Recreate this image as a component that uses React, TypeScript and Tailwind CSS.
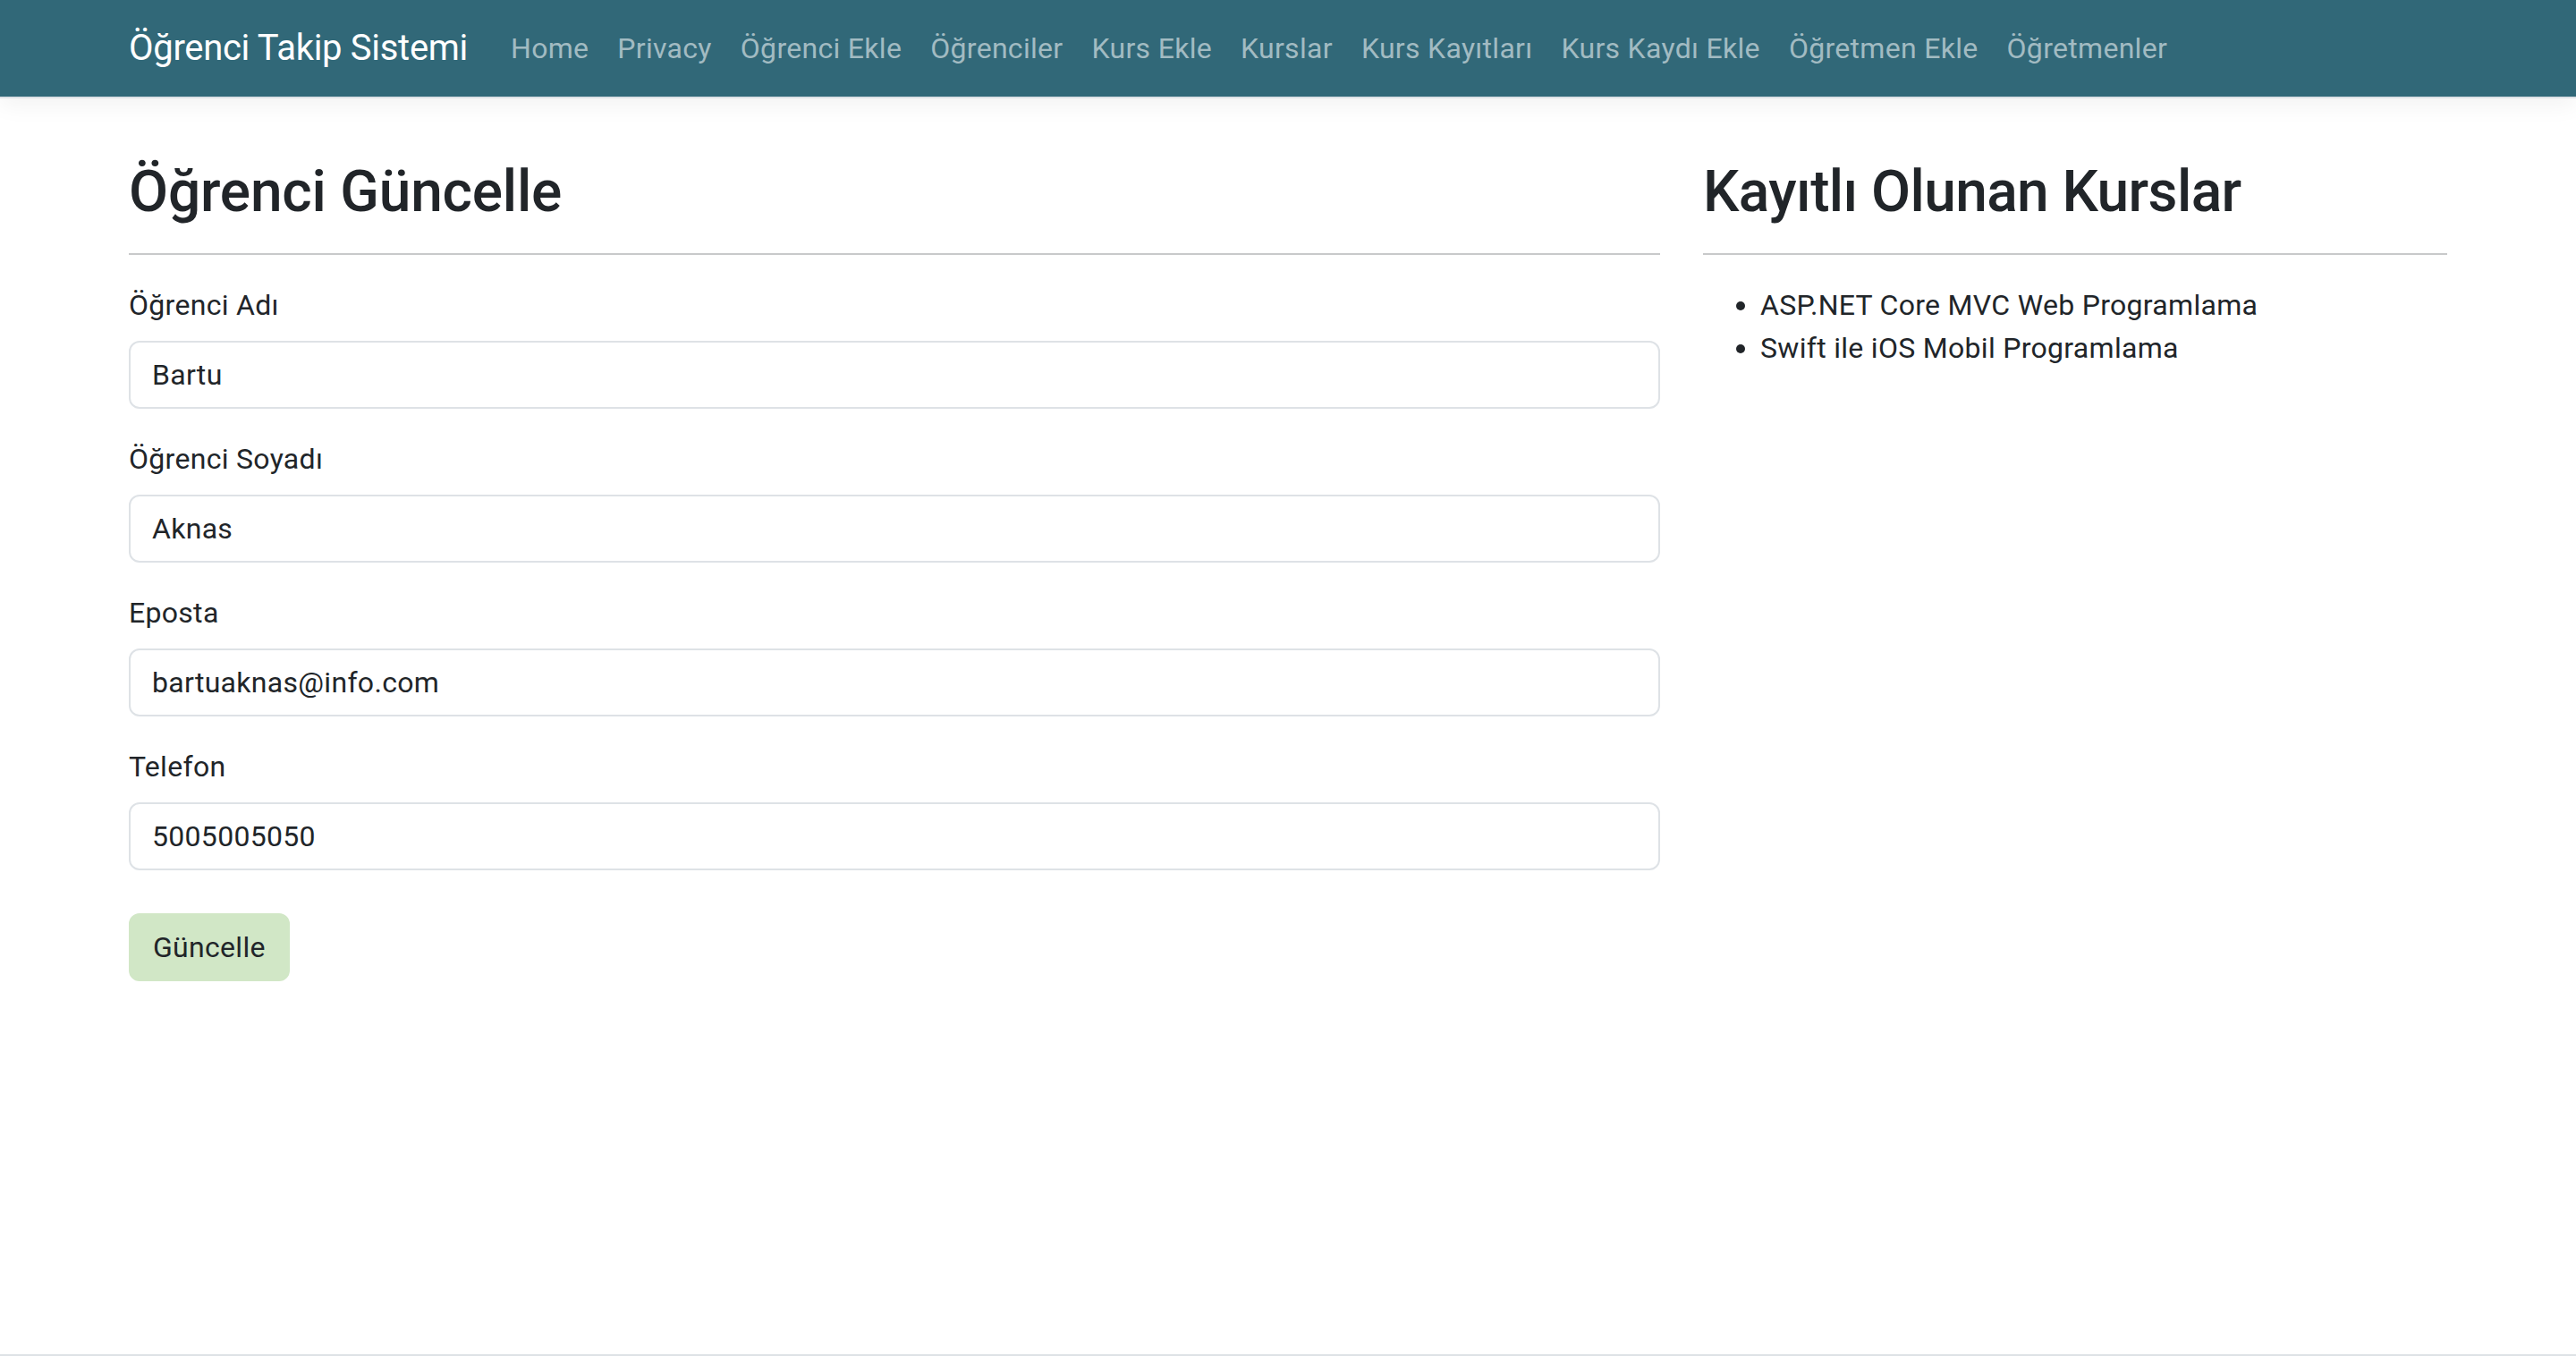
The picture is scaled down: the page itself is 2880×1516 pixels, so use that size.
import React from 'react';

const NAV_LINKS = [
  'Home',
  'Privacy',
  'Öğrenci Ekle',
  'Öğrenciler',
  'Kurs Ekle',
  'Kurslar',
  'Kurs Kayıtları',
  'Kurs Kaydı Ekle',
  'Öğretmen Ekle',
  'Öğretmenler',
];

const FIELDS = [
  { label: 'Öğrenci Adı', value: 'Bartu' },
  { label: 'Öğrenci Soyadı', value: 'Aknas' },
  { label: 'Eposta', value: 'bartuaknas@info.com' },
  { label: 'Telefon', value: '5005005050' },
];

const COURSES = ['ASP.NET Core MVC Web Programlama', 'Swift ile iOS Mobil Programlama'];

export default function App() {
  return (
    <div className="h-screen flex flex-col bg-white text-[#212529] font-['Roboto','Liberation_Sans',sans-serif]">
      <nav className="h-[110px] shrink-0 bg-[#316878] border-b-2 border-[#dee2e6] shadow-[0_8px_24px_rgba(0,0,0,0.05)]">
        <div className="mx-auto w-[2640px] px-6 h-full flex items-center">
          <a className="text-[40px] leading-[60px] py-[10px] mr-8 tracking-[-0.3px] text-white whitespace-nowrap">Öğrenci Takip Sistemi</a>
          <ul className="flex items-center">
            {NAV_LINKS.map(link => (
              <li key={link}>
                <a className="block px-4 py-4 text-[32px] leading-[48px] tracking-[0.3px] text-[#a2bbc2] whitespace-nowrap">{link}</a>
              </li>
            ))}
          </ul>
        </div>
      </nav>

      <main className="flex-1">
        <div className="mx-auto w-[2640px] px-6 pt-16">
          <div className="flex gap-12">
            <div className="w-[1712px] shrink-0">
              <h2 className="pt-[3px] text-[64px] leading-[1.2] font-medium tracking-[-0.2px]">Öğrenci Güncelle</h2>
              <hr className="mt-[29px] mb-8 border-0 border-t-2 border-[#c8c9ca]" />
              <form onSubmit={e => e.preventDefault()}>
                {FIELDS.map(field => (
                  <div key={field.label} className="mb-8">
                    <label className="block text-[32px] leading-[48px] tracking-[0.3px] mb-4">{field.label}</label>
                    <input
                      type="text"
                      defaultValue={field.value}
                      className="block w-full h-[76px] px-6 text-[32px] leading-[48px] tracking-[0.3px] text-[#212529] bg-white border-2 border-[#dee2e6] rounded-xl outline-none"
                    />
                  </div>
                ))}
                <button
                  type="submit"
                  className="mt-4 h-[76px] px-[25px] text-[32px] leading-[48px] tracking-[0.3px] text-[#212529] bg-[#d1e7c6] border-2 border-[#d1e7c6] rounded-xl"
                >
                  Güncelle
                </button>
              </form>
            </div>

            <div className="flex-1">
              <h2 className="pt-[3px] text-[64px] leading-[1.2] font-medium tracking-[-0.6px]">Kayıtlı Olunan Kurslar</h2>
              <hr className="mt-[29px] mb-8 border-0 border-t-2 border-[#c8c9ca]" />
              <ul className="list-disc pl-16 text-[32px] leading-[48px] tracking-[0.3px]">
                {COURSES.map(course => (
                  <li key={course}>{course}</li>
                ))}
              </ul>
            </div>
          </div>
        </div>
      </main>

      <footer className="h-[2px] shrink-0 border-t-2 border-[#dee2e6]" />
    </div>
  );
}
